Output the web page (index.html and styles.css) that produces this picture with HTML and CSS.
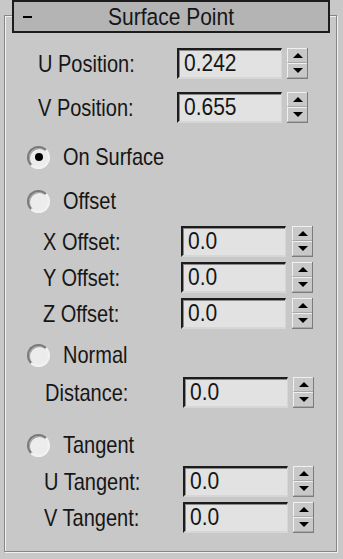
FILE: index.html
```html
<!DOCTYPE html>
<html lang="en">
<head>
    <meta charset="UTF-8">
    <title>Surface Point</title>
    <link rel="stylesheet" href="styles.css">
</head>
<body>
    <div class="rollout">
        <div class="rollout-head">
            <span class="minus"></span>
            <span class="title">Surface Point</span>
        </div>

        <div class="rollout-body">
            <div class="group group-pos">
                <div class="field">
                    <span class="label">U Position:</span>
                    <div class="num"><span>0.242</span></div>
                    <div class="spin"><span class="up"></span><span class="down"></span></div>
                </div>
                <div class="field">
                    <span class="label">V Position:</span>
                    <div class="num"><span>0.655</span></div>
                    <div class="spin"><span class="up"></span><span class="down"></span></div>
                </div>
            </div>

            <div class="option opt-surface"><span class="radio checked"></span><span class="text">On Surface</span></div>
            <div class="option opt-offset"><span class="radio"></span><span class="text">Offset</span></div>

            <div class="group group-offset">
                <div class="field">
                    <span class="label">X Offset:</span>
                    <div class="num"><span>0.0</span></div>
                    <div class="spin"><span class="up"></span><span class="down"></span></div>
                </div>
                <div class="field">
                    <span class="label">Y Offset:</span>
                    <div class="num"><span>0.0</span></div>
                    <div class="spin"><span class="up"></span><span class="down"></span></div>
                </div>
                <div class="field">
                    <span class="label">Z Offset:</span>
                    <div class="num"><span>0.0</span></div>
                    <div class="spin"><span class="up"></span><span class="down"></span></div>
                </div>
            </div>

            <div class="option opt-normal"><span class="radio"></span><span class="text">Normal</span></div>

            <div class="group group-distance">
                <div class="field">
                    <span class="label">Distance:</span>
                    <div class="num"><span>0.0</span></div>
                    <div class="spin"><span class="up"></span><span class="down"></span></div>
                </div>
            </div>

            <div class="option opt-tangent"><span class="radio"></span><span class="text">Tangent</span></div>

            <div class="group group-tangent">
                <div class="field">
                    <span class="label">U Tangent:</span>
                    <div class="num"><span>0.0</span></div>
                    <div class="spin"><span class="up"></span><span class="down"></span></div>
                </div>
                <div class="field">
                    <span class="label">V Tangent:</span>
                    <div class="num"><span>0.0</span></div>
                    <div class="spin"><span class="up"></span><span class="down"></span></div>
                </div>
            </div>
        </div>
    </div>
</body>
</html>
```

FILE: styles.css
```css
:root {
    --panel-bg: #c8c8c8;
    --head-bg: #b4b4b4;
    --field-bg: #e2e2e2;
    --dark: #1c1c1c;
    --shadow: #7c7c7c;
    --light: #f0f0f0;
}

* {
    box-sizing: border-box;
    margin: 0;
    padding: 0;
}

body {
    background-color: var(--panel-bg);
    font-family: 'Liberation Sans', Arial, sans-serif;
    font-size: 20px;
    color: #161616;
    width: 343px;
    height: 559px;
    overflow: hidden;
}

.rollout {
    width: 343px;
}

.rollout-head {
    position: relative;
    z-index: 1;
    display: flex;
    align-items: center;
    margin-left: 12px;
    width: 318px;
    height: 33px;
    border: 2px solid var(--dark);
    background-color: var(--head-bg);
}

.minus {
    width: 9px;
    height: 2px;
    margin-left: 9px;
    background-color: #000;
}

/* the panel font is a tall, narrow bitmap face */
.title,
.label,
.num span,
.option .text {
    display: inline-block;
    transform: scaleY(1.18);
}

.title {
    flex: 1;
    margin-right: 18px;
    text-align: center;
    font-size: 21px;
    line-height: 1;
}

.rollout-body {
    display: flex;
    flex-direction: column;
    margin-top: -18px;
    margin-left: 4px;
    width: 333px;
    height: 537px;
    padding-top: 32px;
    border: 1px solid #868686;
    box-shadow: inset 1px 1px 0 var(--light), 1px 1px 0 var(--light);
}

.group {
    display: flex;
    flex-direction: column;
    gap: 5px;
    padding-left: var(--indent);
}

.group-pos {
    --indent: 33px;
    --label: 134px;
    --spin-gap: 5px;
    gap: 13px;
}

.group-offset {
    --indent: 38px;
    --label: 132px;
    --spin-gap: 6px;
    margin-top: 10px;
}

.group-distance {
    --indent: 40px;
    --label: 133px;
    --spin-gap: 5px;
    margin-top: 7px;
}

.group-tangent {
    --indent: 39px;
    --label: 134px;
    --spin-gap: 5px;
    margin-top: 6px;
}

.field {
    display: grid;
    grid-template-columns: var(--label) 105px 21px;
    column-gap: var(--spin-gap);
    align-items: center;
    height: 31px;
}

.label {
    justify-self: start;
    white-space: nowrap;
    line-height: 1;
}

.num {
    height: 31px;
    padding-left: 5px;
    font-size: 21px;
    line-height: 26px;
    background-color: var(--field-bg);
    border-top: 2px solid var(--dark);
    border-left: 2px solid var(--dark);
    border-right: 1px solid #d6d6d6;
    border-bottom: 2px solid #d6d6d6;
    box-shadow: inset 1px 1px 0 #8a8a8a;
}

.spin {
    display: flex;
    flex-direction: column;
    height: 31px;
    border-right: 1px solid var(--shadow);
    border-bottom: 1px solid var(--shadow);
}

.spin span {
    flex: 1;
    display: flex;
    align-items: center;
    justify-content: center;
    border-top: 1px solid var(--light);
    border-left: 1px solid var(--light);
    border-bottom: 1px solid #a8a8a8;
}

.spin .up::before,
.spin .down::before {
    content: '';
    border-left: 5px solid transparent;
    border-right: 5px solid transparent;
}

.spin .up::before {
    border-bottom: 5px solid #000;
}

.spin .down::before {
    border-top: 5px solid #000;
}

.option {
    display: flex;
    align-items: center;
    gap: 13px;
    height: 30px;
    padding-left: 22px;
    line-height: 1;
}

.opt-surface {
    margin-top: 19px;
}

.opt-offset {
    margin-top: 14px;
}

.opt-normal {
    margin-top: 11px;
}

.opt-tangent {
    margin-top: 22px;
}

.radio {
    display: flex;
    align-items: center;
    justify-content: center;
    width: 23px;
    height: 23px;
    border-radius: 50%;
    border: 2px solid;
    border-color: #7a7a7a #f2f2f2 #f2f2f2 #7a7a7a;
    background-color: #ececec;
    box-shadow: inset 1px 1px 0 #a0a0a0;
}

.radio.checked::before {
    content: '';
    width: 8px;
    height: 8px;
    border-radius: 50%;
    background-color: #000;
}
```
